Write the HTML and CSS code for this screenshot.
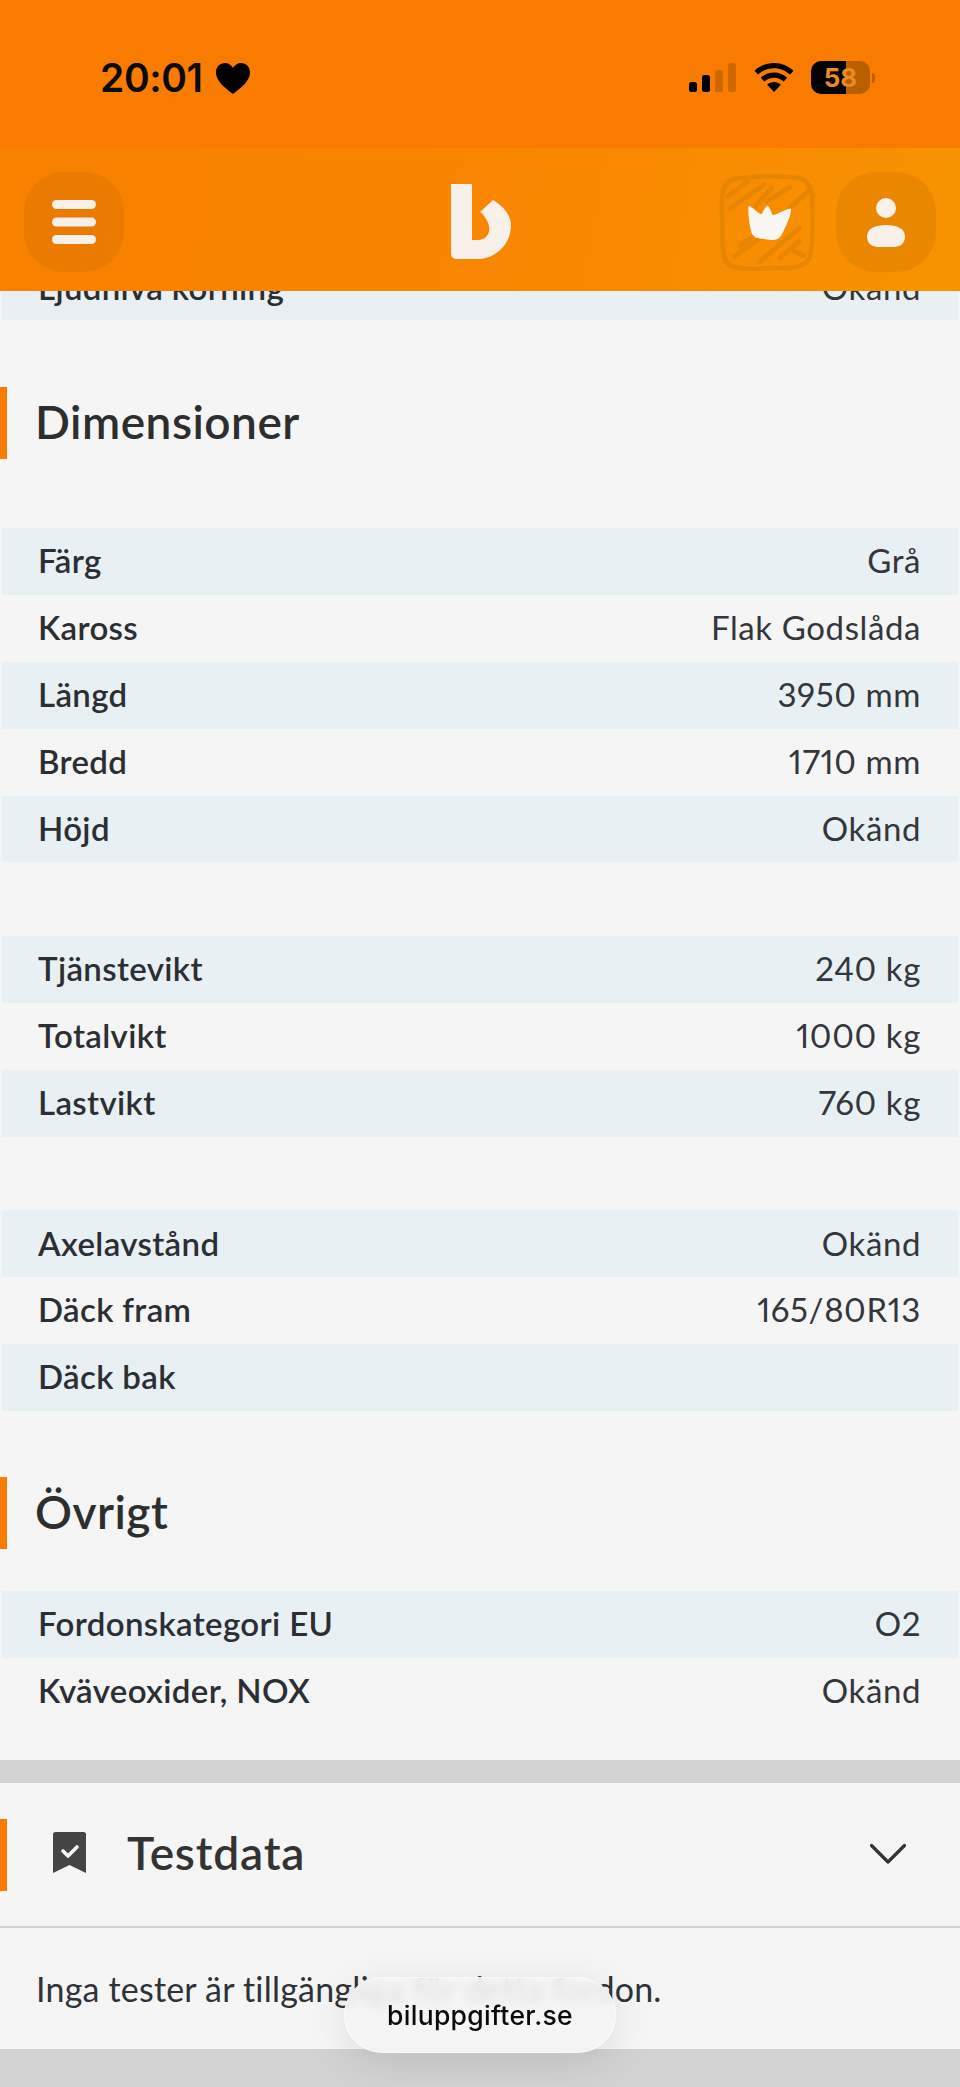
FILE: index.html
```html
<!DOCTYPE html>
<html lang="sv">
<head>
<meta charset="utf-8">
<title>biluppgifter.se</title>
<link rel="stylesheet" href="styles.css">
</head>
<body>
<div class="page">
  <main class="card card-main">
    <div class="table partial">
      <div class="row"><span class="key">Ljudnivå körning</span><span class="val">Okänd</span></div>
    </div>
    <h2 class="heading heading-dim">Dimensioner</h2>
    <div class="table">
      <div class="row"><span class="key">Färg</span><span class="val">Grå</span></div>
      <div class="row"><span class="key">Kaross</span><span class="val">Flak Godslåda</span></div>
      <div class="row"><span class="key">Längd</span><span class="val">3950 mm</span></div>
      <div class="row"><span class="key">Bredd</span><span class="val">1710 mm</span></div>
      <div class="row"><span class="key">Höjd</span><span class="val">Okänd</span></div>
    </div>
    <div class="table table-gap">
      <div class="row"><span class="key">Tjänstevikt</span><span class="val">240 kg</span></div>
      <div class="row"><span class="key">Totalvikt</span><span class="val">1000 kg</span></div>
      <div class="row"><span class="key">Lastvikt</span><span class="val">760 kg</span></div>
    </div>
    <div class="table table-gap">
      <div class="row"><span class="key">Axelavstånd</span><span class="val">Okänd</span></div>
      <div class="row"><span class="key">Däck fram</span><span class="val">165/80R13</span></div>
      <div class="row"><span class="key">Däck bak</span><span class="val"></span></div>
    </div>
    <h2 class="heading heading-other">Övrigt</h2>
    <div class="table">
      <div class="row"><span class="key">Fordonskategori EU</span><span class="val">O2</span></div>
      <div class="row"><span class="key">Kväveoxider, NOX</span><span class="val">Okänd</span></div>
    </div>
  </main>
  <section class="card card-test">
    <div class="test-head">
      <div class="test-title">
        <svg class="bookmark" viewBox="0 0 33 41" aria-hidden="true"><path d="M2.5 0h28A2.5 2.5 0 0 1 33 2.500V41L16.500 33 0 41V2.500A2.500 2.500 0 0 1 2.500 0z" fill="#444"/><path d="M10 19l5 5 9-9" fill="none" stroke="#f5f5f5" stroke-width="3.600" stroke-linecap="round" stroke-linejoin="round"/></svg>
        <h2 class="test-name">Testdata</h2>
      </div>
      <svg class="chevron" viewBox="0 0 36 22" aria-hidden="true"><path d="M1.500 2.500L18 19 34.500 2.500" fill="none" stroke="#333" stroke-width="3.200" stroke-linecap="round" stroke-linejoin="round"/></svg>
    </div>
    <p class="test-body">Inga tester är tillgängliga för detta fordon.</p>
  </section>
</div>

<header class="top">
  <div class="status">
    <div class="status-left">
      <span class="time">20:01</span>
      <svg class="heart" viewBox="0 0 34 31" aria-hidden="true"><path d="M17 31C15 29 0 20 0 9.500 0 3.800 4 0 9 0c3.500 0 6.500 2 8 5 1.500-3 4.500-5 8-5 5 0 9 3.800 9 9.500C34 20 19 29 17 31z" fill="#000"/></svg>
    </div>
    <div class="status-right">
      <svg class="signal" viewBox="0 0 47 29" aria-hidden="true">
        <rect x="0" y="19" width="8" height="10" rx="2.500" fill="#000"/>
        <rect x="13" y="12" width="8" height="17" rx="2.500" fill="#000"/>
        <rect x="26" y="7" width="8" height="22" rx="2.500" fill="#000" opacity=".17"/>
        <rect x="39" y="0" width="8" height="29" rx="2.500" fill="#000" opacity=".17"/>
      </svg>
      <svg class="wifi" viewBox="0 0 40 29" aria-hidden="true">
        <path d="M20 0C12.500 0 5.800 3 .5 7.800l3.500 3.800C8.300 7.600 13.900 5.300 20 5.300s11.700 2.300 16 6.300l3.500-3.800C34.200 3 27.500 0 20 0z" fill="#000"/>
        <path d="M20 9.500c-5 0-9.700 2-13.200 5.200l3.500 3.800c2.600-2.400 6-3.800 9.700-3.800s7.100 1.400 9.700 3.800l3.500-3.800C29.700 11.500 25 9.500 20 9.500z" fill="#000"/>
        <path d="M20 19c-2.600 0-5 1-6.800 2.700L20 29l6.800-7.300C25 20 22.600 19 20 19z" fill="#000"/>
      </svg>
      <div class="battery">
        <div class="battery-body"><span class="battery-num">58</span></div>
        <span class="battery-cap"></span>
      </div>
    </div>
  </div>
  <div class="nav">
    <button class="nav-btn" type="button" aria-label="Meny">
      <svg class="burger" viewBox="0 0 44 44" aria-hidden="true"><rect x="0" y="0" width="44" height="9" rx="4.500"/><rect x="0" y="17.500" width="44" height="9" rx="4.500"/><rect x="0" y="35" width="44" height="9" rx="4.500"/></svg>
    </button>
    <svg class="logo" viewBox="92 72 180 225" aria-hidden="true">
      <path d="M92 72H155V240H172C195 240 207 225 207 205C207 190 195 170 180 155L218 120C250 140 272 165 272 195C272 255 225 297 170 297H110Q92 297 92 279Z" fill="#f7f1ea"/>
    </svg>
    <div class="nav-right">
      <button class="nav-btn nav-btn-sketch" type="button" aria-label="Premium">
        <svg class="sketch" viewBox="85 65 296 300" aria-hidden="true">
          <path d="M165 78C225 72 290 74 330 80C362 88 372 115 370 165C372 225 372 280 362 320C350 352 310 356 240 354C190 358 140 356 118 346C96 330 94 290 96 230C92 180 92 130 102 105C115 84 135 80 165 78Z" fill="none" stroke="#e58500" stroke-width="14"/>
          <g fill="none" stroke="#e58500" stroke-width="15" stroke-linecap="round">
            <path d="M112 135L170 92"/><path d="M118 172L222 100"/><path d="M198 165L244 110"/><path d="M232 150L300 108"/><path d="M302 168L360 118"/>
            <path d="M132 318L218 258"/><path d="M150 285L185 262"/><path d="M208 335L330 232"/><path d="M272 322L330 272"/><path d="M310 300L342 315"/>
          </g>
          <path d="M175 165C185 165 205 190 215 190C220 180 230 160 235 165C243 175 245 190 250 192C265 190 290 172 305 172C305 195 290 225 275 255C265 272 245 270 225 265C205 265 188 262 182 240C178 215 172 185 175 165Z" fill="#f8f6f3"/>
        </svg>
      </button>
      <button class="nav-btn" type="button" aria-label="Konto">
        <svg class="person" viewBox="0 0 38 49" aria-hidden="true"><circle cx="19" cy="10" r="10"/><path d="M19 27c10.500 0 19 3.500 19 11.500 0 7-5 10.500-11 10.500H11C5 49 0 45.500 0 38.500 0 30.500 8.500 27 19 27z"/></svg>
      </button>
    </div>
  </div>
</header>

<div class="pill">biluppgifter.se</div>
</body>
</html>
```
FILE: styles.css
```css
* { box-sizing: border-box; }
html, body { margin: 0; padding: 0; }
body {
  width: 960px;
  height: 2087px;
  overflow: hidden;
  position: relative;
  background: #d2d2d2;
  font-family: "Lato", "Noto Sans", sans-serif;
  color: #2f3237;
}
.page { padding-top: 262px; }
.card { background: #f5f5f5; }
.card-main {
  height: 1498px;
  padding: 0 2px;
}
.table-gap { margin-top: 73.500px; }
.row {
  height: 66.9px;
  padding: 0 37px 2px 36px;
  display: flex;
  justify-content: space-between;
  align-items: center;
  font-size: 33px;
  font-variant-numeric: proportional-nums;
}
.table .row:nth-child(odd) { background: #e9f0f3; }
.key { font-weight: 600; letter-spacing: .35px; color: #2b2e33; }
.val { font-weight: 400; letter-spacing: .6px; color: #33363b; }
.partial .row { height: 58px; padding-bottom: 8px; }
.heading {
  margin: 0 -2px;
  height: 72px;
  padding-left: 28px;
  border-left: 7px solid #f97c00;
  font-size: 46px;
  font-weight: 600;
  letter-spacing: .5px;
  line-height: 70px;
  color: #2e2e2e;
}
.heading-dim { margin-top: 67px; margin-bottom: 69px; }
.heading-other { margin-top: 66px; margin-bottom: 42px; }
.card-test {
  margin-top: 23px;
  height: 266px;
}
.test-head {
  height: 145px;
  border-bottom: 2px solid #d2d2d2;
  padding: 0 54px 4px 53px;
  display: flex;
  align-items: center;
  justify-content: space-between;
  position: relative;
}
.test-head::before {
  content: "";
  position: absolute;
  left: 0;
  top: 36px;
  width: 7px;
  height: 72px;
  background: #f97c00;
}
.test-title { display: flex; align-items: center; gap: 41px; }
.bookmark { width: 33px; height: 41px; display: block; }
.test-name { margin: 0; font-size: 46px; font-weight: 600; letter-spacing: .8px; color: #333; line-height: 60px; }
.chevron { width: 36px; height: 22px; display: block; margin-top: 3px; }
.test-body { margin: 0; padding: 39px 36px 0; font-size: 34px; letter-spacing: .2px; line-height: 44px; color: #2f3237; }
.top {
  position: absolute;
  left: 0; top: 0;
  width: 960px;
  height: 291px;
  background: #f97c00;
}
.status {
  height: 148px;
  padding: 58px 85px 0 100px;
  display: flex;
  justify-content: space-between;
  align-items: flex-start;
  color: #000;
}
.status-left { display: flex; align-items: center; gap: 13px; }
.time { font-family: "Inter", sans-serif; font-size: 39px; font-weight: 600; line-height: 40px; letter-spacing: -.4px; color: #0a0a0a; }
.heart { width: 34px; height: 31px; display: block; }
.status-right { display: flex; align-items: center; gap: 18px; padding-top: 3px; }
.signal { width: 47px; height: 29px; display: block; }
.wifi { width: 40px; height: 29px; display: block; }
.battery { display: flex; align-items: center; gap: 2px; margin-left: -1px; }
.battery-body {
  width: 59px; height: 33px;
  border-radius: 10px;
  background: linear-gradient(90deg, #000 0 59%, #b85f00 59%);
  display: flex;
  align-items: center;
  justify-content: center;
}
.battery-num { font-family: "Inter", sans-serif; font-size: 26px; font-weight: 700; color: #ee8a22; line-height: 1; }
.battery-cap { width: 3px; height: 10px; border-radius: 0 3px 3px 0; background: #b85f00; }
.nav {
  height: 143px;
  background: linear-gradient(100deg, #f88100 0%, #f98500 50%, #f79300 100%);
  padding: 24px 24px 0 24px;
  display: flex;
  justify-content: space-between;
  align-items: flex-start;
  position: relative;
}
.nav-btn {
  width: 100px;
  height: 100px;
  border: 0;
  padding: 0;
  border-radius: 40px;
  background: rgba(185, 95, 0, .2);
  display: flex;
  align-items: center;
  justify-content: center;
}
.nav-btn-sketch { background: none; width: 97px; }
.nav-right { display: flex; gap: 20px; }
.burger { width: 44px; height: 44px; fill: #f7f1ea; display: block; }
.logo { width: 60px; height: 75px; position: absolute; left: 451px; top: 36px; }
.sketch { width: 97px; height: 99px; display: block; flex: none; }
.person { width: 38px; height: 49px; fill: #f7f1ea; display: block; }
.pill {
  position: absolute;
  left: 344px;
  top: 1977px;
  width: 272px;
  height: 76px;
  border-radius: 38px;
  background: rgba(245,245,245,.88);
  -webkit-backdrop-filter: blur(5px);
  backdrop-filter: blur(5px);
  box-shadow: 0 8px 40px rgba(0,0,0,.1);
  border: 1px solid rgba(255,255,255,.7);
  display: flex;
  align-items: center;
  justify-content: center;
  font-family: "Inter", sans-serif;
  font-size: 26.500px;
  font-weight: 500;
  letter-spacing: .3px;
  color: #0b0b0b;
}
```
